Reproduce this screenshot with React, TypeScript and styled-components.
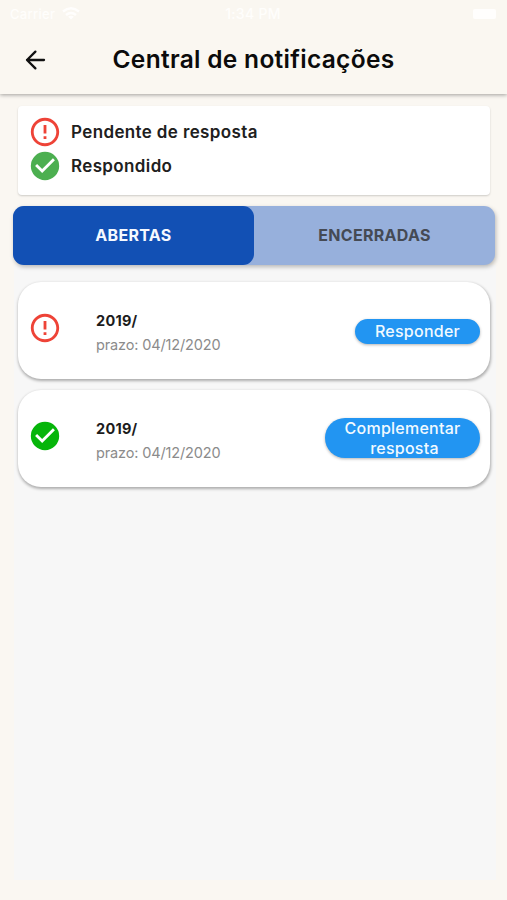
import React from 'react';
import styled, { createGlobalStyle } from 'styled-components';

const GlobalStyle = createGlobalStyle`
  * { box-sizing: border-box; }
  body { margin: 0; background: #faf7f1; font-family: Inter, sans-serif; }
`;

const Screen = styled.div`
  width: 507px;
  height: 900px;
  display: flex;
  flex-direction: column;
  background: #faf7f2;
  overflow: hidden;
`;

const Header = styled.header`
  flex: none;
  height: 94px;
  background: #faf7f1;
  box-shadow: 0 1px 4px rgba(0, 0, 0, 0.36);
  z-index: 1;
`;

const StatusBar = styled.div`
  height: 26px;
  padding: 1px 11px 0 10px;
  display: grid;
  grid-template-columns: 1fr auto 1fr;
  align-items: center;
  color: #fffefc;
  font-size: 14px;
  font-weight: 500;
`;

const StatusSide = styled.div<{ $end?: boolean }>`
  display: flex;
  align-items: center;
  gap: 7px;
  justify-content: ${(p) => (p.$end ? 'flex-end' : 'flex-start')};
`;

const Carrier = styled.span`
  font-size: 13px;
  letter-spacing: 0.3px;
`;

const Clock = styled.span`
  letter-spacing: 0.3px;
`;

const Battery = styled.div`
  width: 23px;
  height: 10px;
  border-radius: 2px;
  background: #fffefd;
`;

const TitleBar = styled.div`
  height: 68px;
  display: grid;
  grid-template-columns: 70px 1fr 70px;
  align-items: center;
`;

const BackButton = styled.button`
  width: 22px;
  height: 22px;
  margin: -1px 0 0 24px;
  padding: 0;
  border: 0;
  background: none;
  display: flex;
`;

const Title = styled.h1`
  margin: -2px 0 0;
  text-align: center;
  white-space: nowrap;
  font-size: 24.5px;
  line-height: 30px;
  font-weight: 600;
  letter-spacing: 0.3px;
  color: #0b0b0b;
`;

const Legend = styled.section`
  flex: none;
  height: 89px;
  margin: 12px 17px 0 18px;
  padding: 8.5px 10px;
  background: #fff;
  border-radius: 4px;
  box-shadow: 0 1px 2px rgba(0, 0, 0, 0.18);
`;

const LegendRow = styled.div`
  height: 34.2px;
  display: flex;
  align-items: center;
  gap: 9px;
  color: #202020;
  font-size: 17px;
  font-weight: 600;
  letter-spacing: 0.37px;
`;

const Tabs = styled.div`
  flex: none;
  height: 59px;
  margin: 11px 12px 0 13px;
  display: grid;
  grid-template-columns: 1fr 1fr;
  border-radius: 11px;
  background: #97b0dc;
  box-shadow: 1px 2px 4px rgba(0, 0, 0, 0.26);
  z-index: 1;
`;

const Tab = styled.button<{ $active?: boolean }>`
  border: 0;
  padding: 0 0 2px;
  border-radius: 11px;
  background: ${(p) => (p.$active ? '#1250b4' : 'transparent')};
  color: ${(p) => (p.$active ? '#f5f9ff' : '#454a54')};
  font: 700 16px Inter, sans-serif;
  letter-spacing: 0.3px;
`;

const Panel = styled.main`
  flex: none;
  height: 615px;
  margin: 0 11px 0 14px;
  padding: 17px 6px 0 4px;
  display: flex;
  flex-direction: column;
  gap: 11px;
  background: #f7f7f7;
`;

const Card = styled.article`
  flex: none;
  height: 97px;
  padding: 0 10px;
  display: grid;
  grid-template-columns: 34px 1fr auto;
  align-items: center;
  border-radius: 23px;
  background: #fff;
  box-shadow: 0.5px 1.5px 3px rgba(0, 0, 0, 0.3);
`;

const IconSlot = styled.div`
  display: flex;
  margin-top: -5px;
`;

const Details = styled.div`
  padding-left: 34px;
  margin-top: 4px;
`;

const Process = styled.div`
  font-size: 14.5px;
  line-height: 24px;
  font-weight: 700;
  letter-spacing: 0.25px;
  color: #1c1c1c;
`;

const Deadline = styled.div`
  font-size: 14.5px;
  line-height: 24px;
  letter-spacing: -0.14px;
  color: #8b8b8b;
`;

const Action = styled.button<{ $wide?: boolean }>`
  width: ${(p) => (p.$wide ? 155 : 125)}px;
  height: ${(p) => (p.$wide ? 40 : 25)}px;
  margin-top: ${(p) => (p.$wide ? -1 : 1)}px;
  padding: 1px 0 0;
  border: 0;
  border-radius: 20px;
  background: #2295f2;
  color: #f1faff;
  font: 500 16px/19.5px Inter, sans-serif;
  letter-spacing: 0.25px;
  box-shadow: 0 1px 3px rgba(0, 0, 0, 0.3);
`;

const ActionLine = styled.span<{ $indent?: boolean }>`
  display: block;
  padding-left: ${(p) => (p.$indent ? 4 : 0)}px;
`;

const PendingIcon = () => (
  <svg width="34" height="34" viewBox="0 0 24 24" fill="#ee4337">
    <path d="M11 15h2v2h-2zm0-8h2v6h-2zm.99-5C6.47 2 2 6.48 2 12s4.47 10 9.99 10C17.52 22 22 17.52 22 12S17.52 2 11.99 2zM12 20c-4.42 0-8-3.58-8-8s3.58-8 8-8 8 3.58 8 8-3.58 8-8 8z" />
  </svg>
);

const AnsweredIcon = ({ color }: { color: string }) => (
  <svg width="34" height="34" viewBox="0 0 24 24">
    <circle cx="12" cy="12" r="10" fill={color} />
    <path d="M10 17l-5-5 1.41-1.41L10 14.17l7.59-7.59L19 8z" fill="#fff" />
  </svg>
);

const BackIcon = () => (
  <svg width="22" height="22" viewBox="0 0 22 22" fill="none" stroke="#111" strokeWidth="2.3" strokeLinecap="round" strokeLinejoin="round">
    <path d="M20 11H3M11.4 2.6L3 11l8.4 8.4" />
  </svg>
);

const WifiIcon = () => (
  <svg width="18" height="13" viewBox="0 0 18 13" fill="none" stroke="#fffefd" strokeWidth="2.4">
    <path d="M1 4.5Q9-2 17 4.5M4 8Q9 3.8 14 8" />
    <path d="M9 12.5L6.2 9.7Q9 7.8 11.8 9.7Z" fill="#fffefd" stroke="none" />
  </svg>
);

const notifications = [
  { process: '2019/', deadline: '04/12/2020', answered: false, action: ['Responder'] },
  { process: '2019/', deadline: '04/12/2020', answered: true, action: ['Complementar', 'resposta'] },
];

export default function App() {
  return (
    <Screen>
      <GlobalStyle />
      <Header>
        <StatusBar>
          <StatusSide><Carrier>Carrier</Carrier><WifiIcon /></StatusSide>
          <Clock>1:34 PM</Clock>
          <StatusSide $end><Battery /></StatusSide>
        </StatusBar>
        <TitleBar>
          <BackButton aria-label="Voltar"><BackIcon /></BackButton>
          <Title>Central de notificações</Title>
        </TitleBar>
      </Header>
      <Legend>
        <LegendRow><PendingIcon />Pendente de resposta</LegendRow>
        <LegendRow><AnsweredIcon color="#4caf50" />Respondido</LegendRow>
      </Legend>
      <Tabs>
        <Tab $active>ABERTAS</Tab>
        <Tab>ENCERRADAS</Tab>
      </Tabs>
      <Panel>
        {notifications.map((n) => (
          <Card key={n.action[0]}>
            <IconSlot>{n.answered ? <AnsweredIcon color="#06b50a" /> : <PendingIcon />}</IconSlot>
            <Details>
              <Process>{n.process}</Process>
              <Deadline>prazo: {n.deadline}</Deadline>
            </Details>
            <Action $wide={n.answered}>
              {n.action.map((line, i) => (
                <ActionLine key={line} $indent={i > 0}>{line}</ActionLine>
              ))}
            </Action>
          </Card>
        ))}
      </Panel>
    </Screen>
  );
}
